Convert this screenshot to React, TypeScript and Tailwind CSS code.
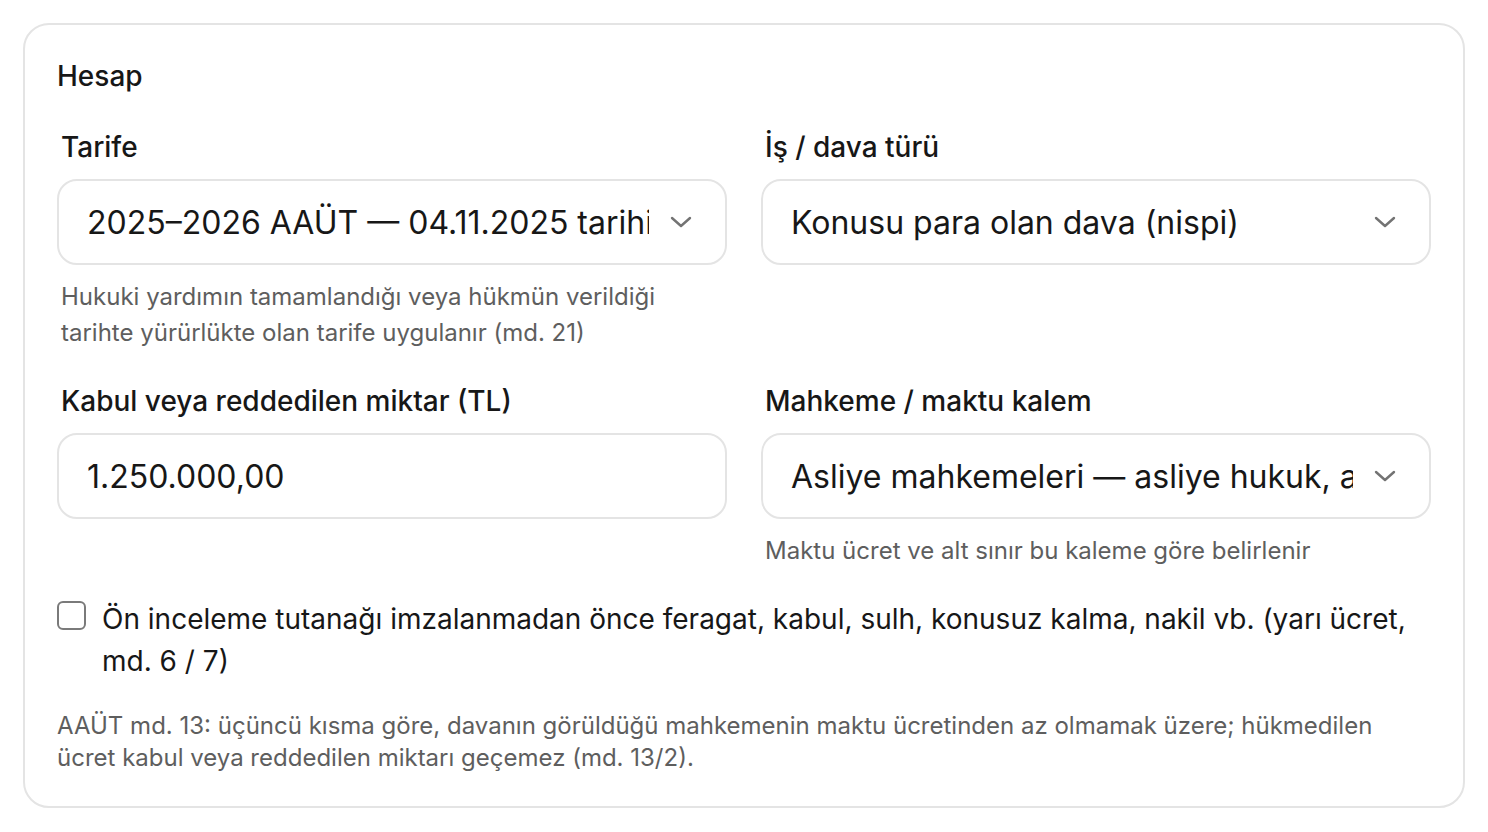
import React from 'react'

const font = { fontFamily: 'Inter, "Noto Sans", sans-serif' }

function Chevron() {
  return (
    <svg width="22" height="12" viewBox="0 0 22 12" fill="none" className="shrink-0">
      <path d="M2 2l9 8 9-8" stroke="#737373" strokeWidth="2.4" strokeLinecap="round" strokeLinejoin="round" />
    </svg>
  )
}

function Field({ label, value, select, help }: { label: string; value: string; select?: boolean; help?: React.ReactNode }) {
  return (
    <div className="flex flex-col">
      <label className="px-1 text-[28px] leading-[40px] font-medium text-[#171717]">{label}</label>
      <div className="mt-3 h-[86px] flex items-center rounded-[20px] border-2 border-[#e4e4e4] bg-white pl-[28px] pr-[33px]">
        <span className="flex-1 min-w-0 overflow-hidden whitespace-nowrap pt-[2px] text-[32px] text-[#171717]">{value}</span>
        {select && (
          <span className="ml-[21px] flex items-center">
            <Chevron />
          </span>
        )}
      </div>
      {help && <p className="mt-[14px] px-1 text-[24px] leading-[36px] text-[#5e5e5e]">{help}</p>}
    </div>
  )
}

export default function App() {
  return (
    <div className="min-h-screen bg-white p-[23px]" style={font}>
      <div className="rounded-[26px] border-2 border-[#e4e4e4] bg-white px-[32px] pt-[31px] pb-[32px]">
        <h2 className="text-[28px] leading-[40px] font-medium text-[#171717]">Hesap</h2>

        <div className="mt-[31px] grid grid-cols-2 gap-x-[34px] gap-y-[30px] items-start">
          <Field
            label="Tarife"
            select
            value="2025–2026 AAÜT — 04.11.2025 tarihinden itibaren"
            help={<>Hukuki yardımın tamamlandığı veya hükmün verildiği<br />tarihte yürürlükte olan tarife uygulanır (md. 21)</>}
          />
          <Field label="İş / dava türü" select value="Konusu para olan dava (nispi)" />
          <Field label="Kabul veya reddedilen miktar (TL)" value="1.250.000,00" />
          <Field
            label="Mahkeme / maktu kalem"
            select
            value="Asliye mahkemeleri — asliye hukuk, asliye ticaret"
            help="Maktu ücret ve alt sınır bu kaleme göre belirlenir"
          />
        </div>

        <label className="mt-[29px] flex items-start gap-4 cursor-pointer">
          <span className="mt-[3px] h-[29px] w-[29px] shrink-0 rounded-[6px] border-2 border-[#7a7a7a] bg-white" />
          <span className="text-[28px] leading-[42px] text-[#171717]">
            Ön inceleme tutanağı imzalanmadan önce feragat, kabul, sulh, konusuz kalma, nakil vb. (yarı ücret, md. 6 / 7)
          </span>
        </label>

        <p className="mt-[28px] text-[24px] leading-[32px] text-[#5e5e5e]">
          AAÜT md. 13: üçüncü kısma göre, davanın görüldüğü mahkemenin maktu ücretinden az olmamak üzere; hükmedilen ücret kabul veya reddedilen miktarı geçemez (md. 13/2).
        </p>
      </div>
    </div>
  )
}
